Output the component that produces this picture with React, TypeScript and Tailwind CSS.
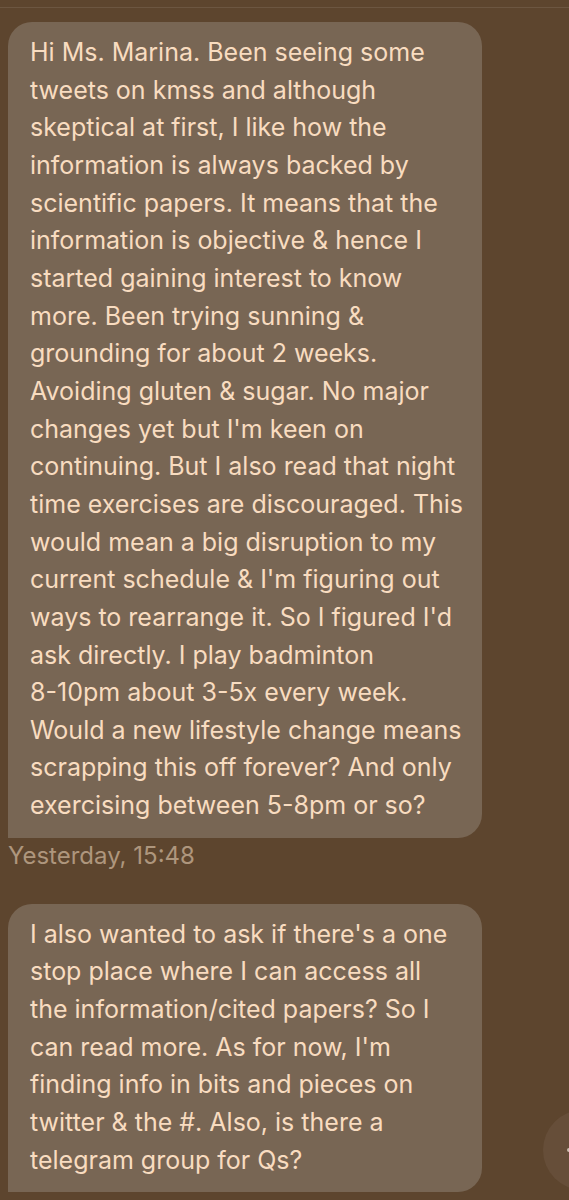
const first = [
  "Hi Ms. Marina. Been seeing some",
  "tweets on kmss and although",
  "skeptical at first, I like how the",
  "information is always backed by",
  "scientific papers. It means that the",
  "information is objective & hence I",
  "started gaining interest to know",
  "more. Been trying sunning &",
  "grounding for about 2 weeks.",
  "Avoiding gluten & sugar. No major",
  "changes yet but I'm keen on",
  "continuing. But I also read that night",
  "time exercises are discouraged. This",
  "would mean a big disruption to my",
  "current schedule & I'm figuring out",
  "ways to rearrange it. So I figured I'd",
  "ask directly. I play badminton",
  "8-10pm about 3-5x every week.",
  "Would a new lifestyle change means",
  "scrapping this off forever? And only",
  "exercising between 5-8pm or so?",
];

const second = [
  "I also wanted to ask if there's a one",
  "stop place where I can access all",
  "the information/cited papers? So I",
  "can read more. As for now, I'm",
  "finding info in bits and pieces on",
  "twitter & the #. Also, is there a",
  "telegram group for Qs?",
];

function Bubble({ lines }: { lines: string[] }) {
  return (
    <div className="ml-2 w-[474px] rounded-[24px] rounded-bl-none bg-[#786654] pl-[22px] pr-4 pt-3 pb-[13px] text-[25px] leading-[37.65px] text-[#f8dcc0]">
      {lines.map((l, i) => (
        <div key={i} className="whitespace-nowrap">
          {l}
        </div>
      ))}
    </div>
  );
}

export default function App() {
  return (
    <div
      className="relative h-[1200px] w-[569px] overflow-hidden bg-[#5d452e]"
      style={{ fontFamily: "Inter, 'Liberation Sans', sans-serif" }}
    >
      <div className="h-[7px]" />
      <div className="h-px bg-[#6c5641]" />
      <div className="pt-[14px]">
        <Bubble lines={first} />
        <div className="ml-2 mt-[3px] text-[24px] leading-[30px] text-[#ae967d]">
          Yesterday, 15:48
        </div>
        <div className="h-[33px]" />
        <Bubble lines={second} />
      </div>
      <div className="absolute left-[543px] top-[1110px] flex h-20 w-20 items-center rounded-full bg-[#664e39] pl-6">
        <div className="h-1 w-1 rounded-full bg-[#cdbfb1]" />
      </div>
    </div>
  );
}
